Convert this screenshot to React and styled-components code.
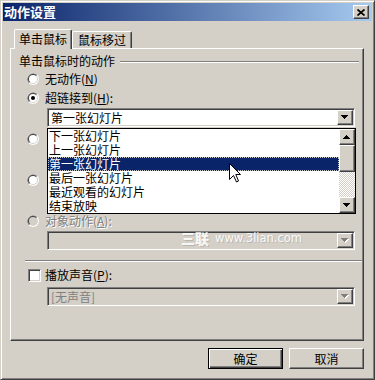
import React from 'react';
import styled, { createGlobalStyle, css } from 'styled-components';

const FACE = '#d4d0c8';
const SHADOW = '#808080';
const DARK = '#404040';
const NAVY = '#0a246a';

const GlobalStyle = createGlobalStyle`
  html, body {
    margin: 0;
    padding: 0;
    background: ${FACE};
  }
  body {
    font-family: "Noto Sans CJK SC", "Noto Sans", sans-serif;
    font-size: 12px;
    color: #000;
  }
`;

const raised = css`
  border: 1px solid;
  border-color: #fff ${DARK} ${DARK} #fff;
  box-shadow: inset -1px -1px ${SHADOW};
`;

const sunken = css`
  border: 1px solid;
  border-color: ${SHADOW} #fff #fff ${SHADOW};
  box-shadow: inset 1px 1px ${DARK}, inset -1px -1px ${FACE};
`;

const Window = styled.div`
  position: relative;
  box-sizing: border-box;
  width: 375px;
  height: 380px;
  display: flex;
  flex-direction: column;
  padding: 2px;
  background: ${FACE};
  border: 1px solid;
  border-color: ${FACE} ${DARK} ${DARK} ${FACE};
  box-shadow: inset 1px 1px #fff, inset -1px -1px ${SHADOW};
  overflow: hidden;
`;

const TitleBar = styled.div`
  flex-shrink: 0;
  height: 18px;
  display: flex;
  align-items: center;
  justify-content: space-between;
  padding: 0 3px 0 1px;
  background: linear-gradient(to right, ${NAVY}, #a6caf0);
`;

const Title = styled.span`
  color: #fff;
  font-weight: bold;
  font-size: 13px;
  line-height: 18px;
`;

const CloseButton = styled.div`
  box-sizing: border-box;
  width: 16px;
  height: 14px;
  background: ${FACE};
  ${raised};
  display: flex;
  align-items: center;
  justify-content: center;
`;

const Body = styled.div`
  flex: 1;
  display: flex;
  flex-direction: column;
  padding: 8px 8px 8px 7px;
`;

const TabStrip = styled.div`
  position: relative;
  z-index: 1;
  height: 19px;
  display: flex;
  align-items: flex-end;
  padding-left: 4px;
`;

const Tab = styled.div`
  box-sizing: border-box;
  height: ${(p) => (p.$active ? 20 : 17)}px;
  margin-bottom: ${(p) => (p.$active ? -1 : 0)}px;
  padding: 0 ${(p) => (p.$active ? 4 : 5)}px;
  line-height: ${(p) => (p.$active ? 18 : 16)}px;
  background: ${FACE};
  border-top: 1px solid #fff;
  border-left: 1px solid #fff;
  border-right: 1px solid ${DARK};
  box-shadow: inset -1px 0 ${SHADOW};
  border-radius: 2px 2px 0 0;
  white-space: nowrap;
`;

const Panel = styled.div`
  flex: 1;
  display: flex;
  flex-direction: column;
  padding: 0 1px 0 8px;
  border: 1px solid;
  border-color: #fff ${DARK} ${DARK} #fff;
  box-shadow: inset -1px -1px ${SHADOW};
`;

const GroupHeader = styled.div`
  height: 14px;
  margin-top: 5px;
  display: flex;
  align-items: center;
  line-height: 14px;
`;

const EtchedLine = styled.div`
  height: 0;
  border-top: 1px solid ${SHADOW};
  border-bottom: 1px solid #fff;
`;

const HeaderLine = styled(EtchedLine)`
  flex: 1;
  margin: 1px 3px 0 5px;
`;

const Options = styled.div`
  display: flex;
  flex-direction: column;
  margin: 3px 7px 0 8px;
`;

const Block = styled.div`
  position: relative;
  display: flex;
  flex-direction: column;
  margin-top: ${(p) => p.$gap}px;
`;

const OptionRow = styled.div`
  height: 16px;
  display: flex;
  align-items: center;
  gap: 6px;
  line-height: 16px;
  white-space: nowrap;
`;

const Label = styled.span`
  color: ${(p) => (p.$disabled ? SHADOW : '#000')};
  text-shadow: ${(p) => (p.$disabled ? '1px 1px #fff' : 'none')};
`;

const Key = styled.span`
  text-decoration: underline;
`;

const ComboWrap = styled.div`
  position: relative;
  margin: 2px 0 0 20px;
`;

const Combo = styled.div`
  box-sizing: border-box;
  height: 19px;
  display: flex;
  padding: 1px;
  background: ${(p) => (p.$disabled ? FACE : '#fff')};
  ${sunken};
`;

const ComboText = styled.span`
  flex: 1;
  padding-left: 2px;
  line-height: 15px;
  white-space: nowrap;
  color: ${(p) => (p.$disabled ? SHADOW : '#000')};
`;

const ArrowButton = styled.div`
  box-sizing: border-box;
  width: 16px;
  height: ${(p) => p.$h || 15}px;
  flex-shrink: 0;
  background: ${FACE};
  ${raised};
  display: flex;
  align-items: center;
  justify-content: center;
`;

const DropList = styled.div`
  position: absolute;
  z-index: 5;
  left: 0;
  right: -1px;
  top: calc(100% + 1px);
  box-sizing: border-box;
  height: 86px;
  display: flex;
  background: #fff;
  border: 1px solid #000;
`;

const ListItems = styled.div`
  flex: 1;
`;

const ListItem = styled.div`
  height: 14px;
  line-height: 14px;
  padding-left: 1px;
  white-space: nowrap;
  ${(p) =>
    p.$selected &&
    css`
      background: ${NAVY};
      color: #fff;
      outline: 1px dotted #c8c8c8;
      outline-offset: -1px;
    `}
`;

const ScrollBar = styled.div`
  width: 16px;
  display: flex;
  flex-direction: column;
`;

const Thumb = styled.div`
  box-sizing: border-box;
  height: 27px;
  background: ${FACE};
  ${raised};
`;

const Track = styled.div`
  flex: 1;
  background: repeating-conic-gradient(#fff 0 25%, ${FACE} 0 50%) 0 0 / 2px 2px;
`;

const Cursor = styled.svg`
  position: absolute;
  left: 181px;
  top: 34px;
  z-index: 6;
`;

const Separator = styled(EtchedLine)`
  margin: 10px 0 0 6px;
`;

const CheckRow = styled(OptionRow)`
  margin-top: 5px;
  margin-left: 9px;
  gap: 4px;
`;

const CheckBox = styled.div`
  box-sizing: border-box;
  width: 13px;
  height: 13px;
  background: #fff;
  ${sunken};
`;

const SoundCombo = styled.div`
  margin: 4px 7px 0 28px;
`;

const ButtonRow = styled.div`
  display: flex;
  justify-content: flex-end;
  gap: 6px;
  margin-top: 7px;
`;

const Button = styled.button`
  box-sizing: border-box;
  width: 75px;
  height: 21px;
  padding: 0;
  font: inherit;
  font-size: 12px;
  color: #000;
  background: ${FACE};
  ${raised};
  ${(p) =>
    p.$default &&
    css`
      border: 1px solid #000;
      box-shadow: inset 1px 1px #fff, inset -1px -1px ${DARK}, inset -2px -2px ${SHADOW};
    `}
`;

const Watermark = styled.div`
  position: absolute;
  left: 180px;
  top: 228px;
  display: flex;
  align-items: center;
  gap: 6px;
  color: rgba(255, 255, 255, 0.9);
  text-shadow: 1px 1px rgba(0, 0, 0, 0.15);
  white-space: nowrap;
  pointer-events: none;
`;

const MarkLogo = styled.span`
  font-size: 14px;
  font-weight: 900;
  line-height: 18px;
`;

const MarkUrl = styled.span`
  font-family: "DejaVu Sans", sans-serif;
  font-size: 11.5px;
  line-height: 18px;
`;

const Arrow = ({ up, disabled }) => (
  <svg width="8" height="5" viewBox="0 0 8 5" shapeRendering="crispEdges">
    {disabled && (
      <path
        d={up ? 'M4 1h1v1h1v1h1v1h1v1H1V4h1V3h1V2h1z' : 'M1 1h7v1H7v1H6v1H5v1H4V4H3V3H2V2H1z'}
        fill="#fff"
      />
    )}
    <path
      d={up ? 'M3 0h1v1h1v1h1v1h1v1H0V3h1V2h1V1h1z' : 'M0 0h7v1H6v1H5v1H4v1H3V3H2V2H1V1H0z'}
      fill={disabled ? SHADOW : '#000'}
    />
  </svg>
);

const Radio = ({ checked, disabled }) => (
  <svg width="12" height="12" viewBox="0 0 12 12">
    <circle cx="6" cy="6" r="6" fill="#fff" />
    <path d="M1.76 10.24 A6 6 0 0 1 10.24 1.76 Z" fill={SHADOW} />
    <circle cx="6" cy="6" r="5" fill={FACE} />
    <path d="M2.46 9.54 A5 5 0 0 1 9.54 2.46 Z" fill={DARK} />
    <circle cx="6" cy="6" r="4" fill={disabled ? FACE : '#fff'} />
    {checked && <circle cx="6" cy="6" r="2" fill="#000" />}
  </svg>
);

const DropCombo = ({ text, disabled }) => (
  <Combo $disabled={disabled}>
    <ComboText $disabled={disabled}>{text}</ComboText>
    <ArrowButton>
      <Arrow disabled={disabled} />
    </ArrowButton>
  </Combo>
);

const slides = ['下一张幻灯片', '上一张幻灯片', '第一张幻灯片', '最后一张幻灯片', '最近观看的幻灯片', '结束放映'];

export default function App() {
  return (
    <>
      <GlobalStyle />
      <Window>
        <TitleBar>
          <Title>动作设置</Title>
          <CloseButton>
            <svg width="8" height="7" viewBox="0 0 8 7">
              <path d="M0.5 0.5 L7.5 6.5 M7.5 0.5 L0.5 6.5" stroke="#000" strokeWidth="1.7" />
            </svg>
          </CloseButton>
        </TitleBar>

        <Body>
          <TabStrip>
            <Tab $active>单击鼠标</Tab>
            <Tab>鼠标移过</Tab>
          </TabStrip>

          <Panel>
            <GroupHeader>
              <span>单击鼠标时的动作</span>
              <HeaderLine />
            </GroupHeader>

            <Options>
              <OptionRow>
                <Radio />
                <Label>
                  无动作(<Key>N</Key>)
                </Label>
              </OptionRow>

              <Block $gap={3}>
                <OptionRow>
                  <Radio checked />
                  <Label>
                    超链接到(<Key>H</Key>):
                  </Label>
                </OptionRow>
                <ComboWrap>
                  <DropCombo text="第一张幻灯片" />
                  <DropList>
                    <ListItems>
                      {slides.map((s, i) => (
                        <ListItem key={s} $selected={i === 2}>
                          {s}
                        </ListItem>
                      ))}
                    </ListItems>
                    <ScrollBar>
                      <ArrowButton $h={16}>
                        <Arrow up />
                      </ArrowButton>
                      <Thumb />
                      <Track />
                      <ArrowButton $h={16}>
                        <Arrow />
                      </ArrowButton>
                    </ScrollBar>
                    <Cursor width="13" height="20" viewBox="0 0 13 20">
                      <path
                        d="M0.5 0.5 V16.5 L4.5 12.5 L7.5 19 L9.5 18 L6.8 11.5 H11.5 Z"
                        fill="#fff"
                        stroke="#000"
                        strokeWidth="1"
                      />
                    </Cursor>
                  </DropList>
                </ComboWrap>
              </Block>

              {/* two more options sit under the open list; only their radios show */}
              <Block $gap={4}>
                <OptionRow>
                  <Radio />
                </OptionRow>
                <ComboWrap>
                  <DropCombo text="" />
                </ComboWrap>
              </Block>

              <Block $gap={4}>
                <OptionRow>
                  <Radio />
                </OptionRow>
                <ComboWrap>
                  <DropCombo text="" />
                </ComboWrap>
              </Block>

              <Block $gap={4}>
                <OptionRow>
                  <Radio disabled />
                  <Label $disabled>
                    对象动作(<Key>A</Key>):
                  </Label>
                </OptionRow>
                <ComboWrap>
                  <DropCombo text="" disabled />
                </ComboWrap>
              </Block>
            </Options>

            <Separator />

            <CheckRow>
              <CheckBox />
              <Label>
                播放声音(<Key>P</Key>):
              </Label>
            </CheckRow>

            <SoundCombo>
              <DropCombo text="[无声音]" disabled />
            </SoundCombo>
          </Panel>

          <ButtonRow>
            <Button $default>确定</Button>
            <Button>取消</Button>
          </ButtonRow>
        </Body>

        <Watermark>
          <MarkLogo>三联</MarkLogo>
          <MarkUrl>www.3lian.com</MarkUrl>
        </Watermark>
      </Window>
    </>
  );
}
